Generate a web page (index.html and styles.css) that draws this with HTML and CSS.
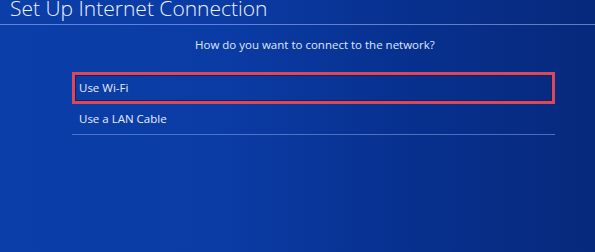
FILE: index.html
```html
<!DOCTYPE html>
<html lang="en">
<head>
    <meta charset="UTF-8">
    <meta name="viewport" content="width=device-width, initial-scale=1.0">
    <title>Set Up Internet Connection</title>
    <link rel="stylesheet" href="styles.css">
</head>
<body>
    <div class="screen">
        <div class="header">
            <h1 class="title">Set Up Internet Connection</h1>
        </div>

        <div class="question">How do you want to connect to the network?</div>

        <div class="menu">
            <div class="menu-item selected">Use Wi-Fi</div>
            <div class="menu-item">Use a LAN Cable</div>
        </div>
    </div>
</body>
</html>
```

FILE: styles.css
```css
html, body {
    margin: 0;
    padding: 0;
}

body {
    font-family: 'Open Sans', 'Noto Sans', sans-serif;
    width: 595px;
    height: 252px;
    overflow: hidden;
    background: linear-gradient(90deg, #0b3ea8 0%, #0b3ca6 35%, #07308e 70%, #07297c 100%);
    color: #e9effb;
}

.screen {
    height: 252px;
}

.header {
    border-bottom: 1px solid rgba(170, 195, 240, 0.55);
    height: 24px;
}

.title {
    margin: 0;
    padding-left: 10px;
    font-size: 21px;
    font-weight: 300;
    line-height: 17px;
    color: #eef3fc;
}

.question {
    margin-top: 11px;
    padding-left: 195px;
    font-size: 11.5px;
    line-height: 18px;
    color: #dfe8f8;
}

.menu {
    margin: 18px 40px 0 72px;
}

.menu-item {
    height: 30px;
    line-height: 30px;
    padding-left: 7px;
    font-size: 11.5px;
    color: #e6edfa;
    border-bottom: 1px solid rgba(120, 155, 225, 0.6);
}

.menu-item.selected {
    border: 3px solid #d9485f;
    box-shadow: inset 0 0 0 1px #1a1f55;
    height: 26px;
    line-height: 26px;
    padding-left: 4px;
}
```
